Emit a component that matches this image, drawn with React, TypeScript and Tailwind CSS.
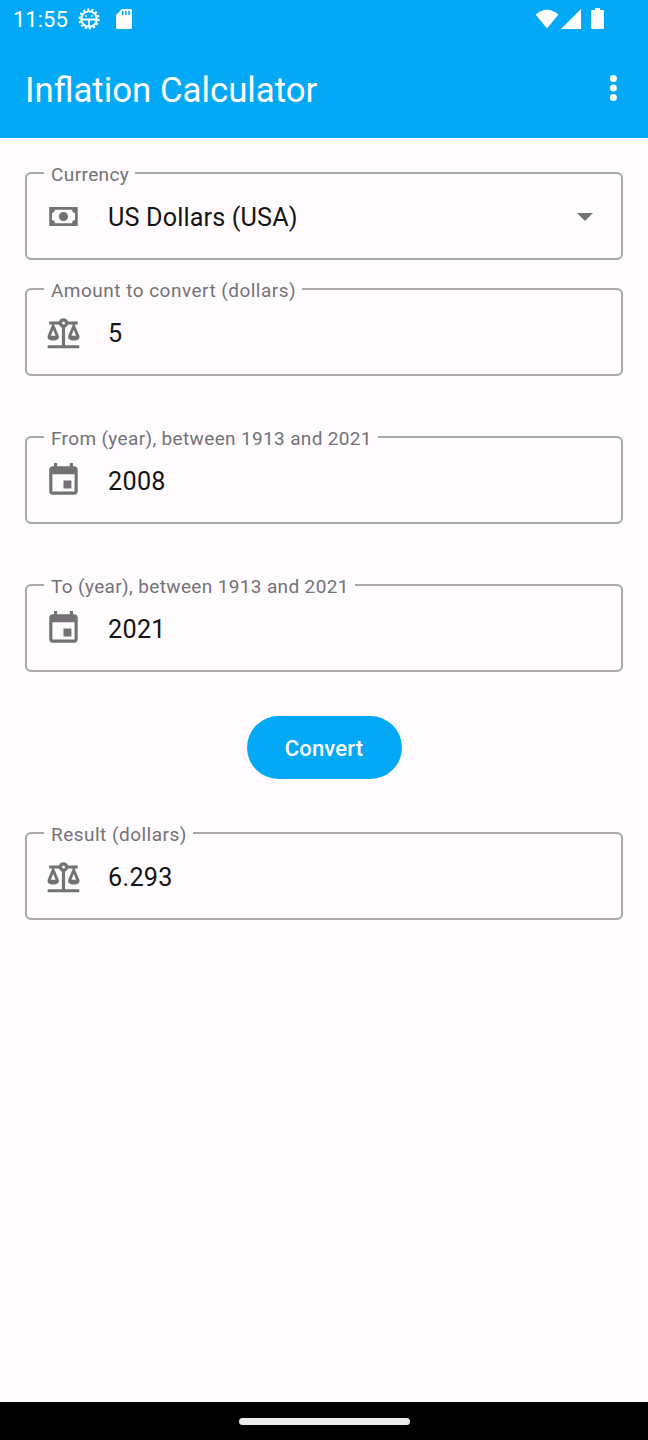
import React from "react";

const CALENDAR =
  "M17 12h-5v5h5v-5zM16 1v2H8V1H6v2H5c-1.11 0-1.99.9-1.99 2L3 19c0 1.1.89 2 2 2h14c1.1 0 2-.9 2-2V5c0-1.1-.9-2-2-2h-1V1h-2zm3 18H5V8h14v11z";
const SCALE =
  "M12,3C10.73,3 9.6,3.8 9.18,5H3V7H4.95L2,14C1.53,16 3,17 5.5,17C8,17 9.56,16 9,14L6.05,7H9.17C9.5,7.85 10.15,8.5 11,8.83V20H2V22H22V20H13V8.82C13.85,8.5 14.5,7.85 14.82,7H17.95L15,14C14.53,16 16,17 18.5,17C21,17 22.56,16 22,14L19.05,7H21V5H14.83C14.4,3.8 13.27,3 12,3M12,5A1,1 0 0,1 13,6A1,1 0 0,1 12,7A1,1 0 0,1 11,6A1,1 0 0,1 12,5M5.5,10.25L7,14H4L5.5,10.25M18.5,10.25L20,14H17L18.5,10.25Z";
const CASH =
  "M3 6H21V18H3zM6.6 7.8C6.6 8.9 5.8 9.8 4.7 9.8V14.2C5.8 14.2 6.6 15.1 6.6 16.2H17.4C17.4 15.1 18.2 14.2 19.3 14.2V9.8C18.2 9.8 17.4 8.9 17.4 7.8zM12 9.1A2.9 2.9 0 0 1 12 14.9A2.9 2.9 0 0 1 12 9.1z";

type FieldProps = {
  label: string;
  value: string;
  icon: string;
  dropdown?: boolean;
  labelSpacing?: string;
};

function Field({ label, value, icon, dropdown, labelSpacing = "tracking-[0.48px]" }: FieldProps) {
  return (
    <fieldset className="flex h-[100px] w-full min-w-0 rounded-[6px] border-2 border-[#a9a7a9] pl-[17px]">
      <legend
        className={`h-[26px] pr-[6px] pl-[7px] text-[19px] leading-[29px] whitespace-nowrap text-[#747276] ${labelSpacing}`}
      >
        {label}
      </legend>
      <div className="flex h-[60px] w-full items-center">
        <svg viewBox="-0.3 -0.3 24 24" fillRule="evenodd" className="size-[38px] shrink-0 fill-[#737175]">
          <path d={icon} />
        </svg>
        <span
          className={`ml-[26px] pt-[4px] text-[25.2px] text-[#141414] ${
            dropdown ? "tracking-[0.15px]" : "tracking-[0.3px]"
          }`}
        >
          {value}
        </span>
        {dropdown && (
          <svg viewBox="0 0 16 8" className="mt-px mr-[28px] ml-auto h-2 w-4 fill-[#737175]">
            <path d="M0 0H16L8 8z" />
          </svg>
        )}
      </div>
    </fieldset>
  );
}

function StatusBar() {
  return (
    <div className="flex h-[38px] items-center pr-[44px] pl-[13px]">
      <span className="w-[65px] pt-[2px] text-[22px] leading-[38px]">11:55</span>
      <svg viewBox="0 0 22 22" className="size-[22px]" fill="none" stroke="white">
        <circle cx="11" cy="11" r="7.8" strokeWidth="2" />
        <circle cx="11" cy="11" r="9.6" strokeWidth="2" strokeDasharray="2.15 2.16" />
        <path d="M3.5 11.5H18.5M11 12V19" strokeWidth="1.8" />
        <path d="M7.3 8h1.6M13.1 8h1.6" strokeWidth="1.6" />
      </svg>
      <svg viewBox="0 0 16 20" className="ml-[16px] h-5 w-4" fill="white">
        <path
          fillRule="evenodd"
          d="M6 0H14.4Q16 0 16 1.6V18.4Q16 20 14.4 20H1.6Q0 20 0 18.4V6zM6 2V6H7.6V2zM9.1 2V6H10.7V2zM12.2 2V6H13.8V2z"
        />
      </svg>
      <svg viewBox="0 0 24 20" className="-mt-px ml-auto h-5 w-6" fill="white">
        <path d="M12 19.6L.6 5.4Q12-4 23.4 5.4z" />
      </svg>
      <svg viewBox="0 0 20 20" className="-mt-px ml-[2px] size-5" fill="white">
        <path d="M20 0V20H0z" />
      </svg>
      <svg viewBox="0 0 13 21" className="-mt-px ml-[10px] h-[21px] w-[13px]" fill="white">
        <path d="M4 0H9V2H11.7Q13 2 13 3.3V19.7Q13 21 11.7 21H1.3Q0 21 0 19.7V3.3Q0 2 1.3 2H4z" />
      </svg>
    </div>
  );
}

export default function App() {
  return (
    <div className="flex h-[1440px] w-[648px] flex-col bg-[#fffbff] font-[Roboto,sans-serif]">
      <header className="h-[138px] bg-[#03a9f6] text-white">
        <StatusBar />
        <div className="flex h-[100px] items-center justify-between pr-[31px] pl-[25px]">
          <h1 className="pt-[4px] text-[34.8px] leading-[40px]">Inflation Calculator</h1>
          <svg viewBox="0 0 8 26" className="h-[26px] w-2" fill="white">
            <circle cx="4.4" cy="3.6" r="3.5" />
            <circle cx="4.4" cy="13" r="3.5" />
            <circle cx="4.4" cy="22.4" r="3.5" />
          </svg>
        </div>
      </header>
      <main className="flex flex-1 flex-col px-[25px] pt-[22px]">
        <Field
          label="Currency"
          value="US Dollars (USA)"
          icon={CASH}
          dropdown
          labelSpacing="tracking-[0.4px]"
        />
        <div className="mt-[16px]">
          <Field label="Amount to convert (dollars)" value="5" icon={SCALE} />
        </div>
        <div className="mt-[48px]">
          <Field
            label="From (year), between 1913 and 2021"
            value="2008"
            icon={CALENDAR}
            labelSpacing="tracking-[0.35px]"
          />
        </div>
        <div className="mt-[48px]">
          <Field
            label="To (year), between 1913 and 2021"
            value="2021"
            icon={CALENDAR}
            labelSpacing="tracking-[0.36px]"
          />
        </div>
        <button className="mt-[44px] h-[63px] w-[155px] self-center rounded-full bg-[#03a9f6] pt-[2px] text-[22px] font-medium tracking-[0.15px] text-white">
          Convert
        </button>
        <div className="mt-[41px]">
          <Field label="Result (dollars)" value="6.293" icon={SCALE} />
        </div>
      </main>
      <footer className="flex h-[38px] items-center justify-center bg-black">
        <div className="h-[7px] w-[171px] rounded-full bg-[#ececec]" />
      </footer>
    </div>
  );
}
